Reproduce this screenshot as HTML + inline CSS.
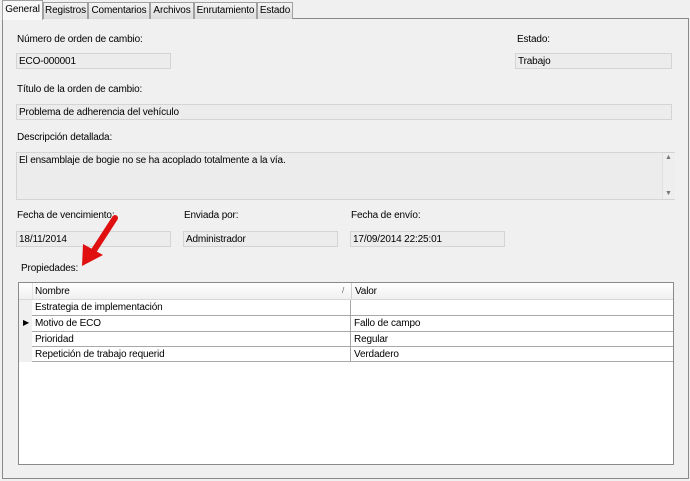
<!DOCTYPE html>
<html><head><style>
body{margin:0;width:690px;height:481px;background:#f0f0f0;font-family:"Liberation Sans",sans-serif;font-size:10px;letter-spacing:-0.15px;color:#000;position:relative;overflow:hidden}
.a{position:absolute;white-space:nowrap}
.tab{position:absolute;top:2px;height:16px;border:1px solid #a0a0a0;border-bottom:none;background:linear-gradient(#f4f4f4,#dcdcdc);line-height:16px;text-align:center;box-sizing:border-box;height:17px}
.box{position:absolute;height:16px;border:1px solid #d4d4d4;background:#ececec;line-height:15px;padding-left:2px;box-sizing:border-box}
.row{position:absolute;left:32px;width:641px;height:15px;border-bottom:1px solid #a8a8a8;background:#fff;line-height:15px}
.row span{position:absolute;left:3px}
.row b{font-weight:normal;position:absolute;left:322px}
.row i{position:absolute;left:318px;top:0;bottom:-1px;border-left:1px solid #a8a8a8}
</style></head><body>
<div class="a" style="left:2px;top:18px;width:685px;height:459px;border:1px solid #8a8a8a;background:#f0f0f0"></div>
<div class="tab" style="left:2px;top:0;height:20px;width:41px;background:#f8f8f8;z-index:2;line-height:18px">General</div>
<div class="tab" style="left:43px;width:45px">Registros</div>
<div class="tab" style="left:88px;width:62px">Comentarios</div>
<div class="tab" style="left:150px;width:44px">Archivos</div>
<div class="tab" style="left:194px;width:63px">Enrutamiento</div>
<div class="tab" style="left:257px;width:36px">Estado</div>

<div class="a" style="left:17px;top:34px">Número de orden de cambio:</div>
<div class="box" style="left:16px;top:53px;width:155px">ECO-000001</div>
<div class="a" style="left:517px;top:34px">Estado:</div>
<div class="box" style="left:515px;top:53px;width:157px">Trabajo</div>
<div class="a" style="left:17px;top:84px">Título de la orden de cambio:</div>
<div class="box" style="left:16px;top:104px;width:656px">Problema de adherencia del vehículo</div>
<div class="a" style="left:17px;top:132px">Descripción detallada:</div>
<div class="box" style="left:16px;top:152px;width:659px;height:48px;line-height:14px;padding-top:1px">El ensamblaje de bogie no se ha acoplado totalmente a la vía.</div>
<div class="a" style="left:662px;top:153px;width:12px;height:46px;border-left:1px solid #e0e0e0;background:#eeeeee"></div>
<div class="a" style="left:665px;top:154px;font-size:7px;color:#777">▲</div>
<div class="a" style="left:665px;top:190px;font-size:7px;color:#777">▼</div>

<div class="a" style="left:17px;top:210px">Fecha de vencimiento:</div>
<div class="a" style="left:184px;top:210px">Enviada por:</div>
<div class="a" style="left:351px;top:210px">Fecha de envío:</div>
<div class="box" style="left:16px;top:231px;width:155px">18/11/2014</div>
<div class="box" style="left:183px;top:231px;width:155px">Administrador</div>
<div class="box" style="left:350px;top:231px;width:155px">17/09/2014 22:25:01</div>
<div class="a" style="left:21px;top:263px">Propiedades:</div>

<div class="a" style="left:18px;top:282px;width:654px;height:181px;border:1px solid #8a8a8a;background:#fff"></div>
<div class="a" style="left:19px;top:283px;width:654px;height:16px;background:linear-gradient(#fff,#f0f0f0);border-bottom:1px solid #d8d8d8"></div>
<div class="a" style="left:32px;top:283px;height:16px;border-left:1px solid #e4e4e4"></div>
<div class="a" style="left:351px;top:283px;height:16px;border-left:1px solid #d0d0d0"></div>
<div class="a" style="left:35px;top:286px">Nombre</div>
<div class="a" style="left:342px;top:286px;font-size:8px;color:#666">/</div>
<div class="a" style="left:355px;top:286px">Valor</div>
<div class="a" style="left:19px;top:300px;width:13px;height:62px;background:#f0f0f0"></div>
<div class="row" style="top:300px"><span>Estrategia de implementación</span><i></i></div>
<div class="row" style="top:316px"><span>Motivo de ECO</span><i></i><b>Fallo de campo</b></div>
<div class="row" style="top:332px;height:14px"><span>Prioridad</span><i></i><b>Regular</b></div>
<div class="row" style="top:347px;height:14px"><span>Repetición de trabajo requerid</span><i></i><b>Verdadero</b></div>
<div class="a" style="left:23px;top:318px;font-size:8px">▶</div>

<svg class="a" style="left:75px;top:210px" width="50" height="62"><line x1="40" y1="8" x2="18" y2="42" stroke="#e01010" stroke-width="6" stroke-linecap="round"/><polygon points="7,56 8,34 28,45" fill="#e01010"/></svg>
</body></html>
